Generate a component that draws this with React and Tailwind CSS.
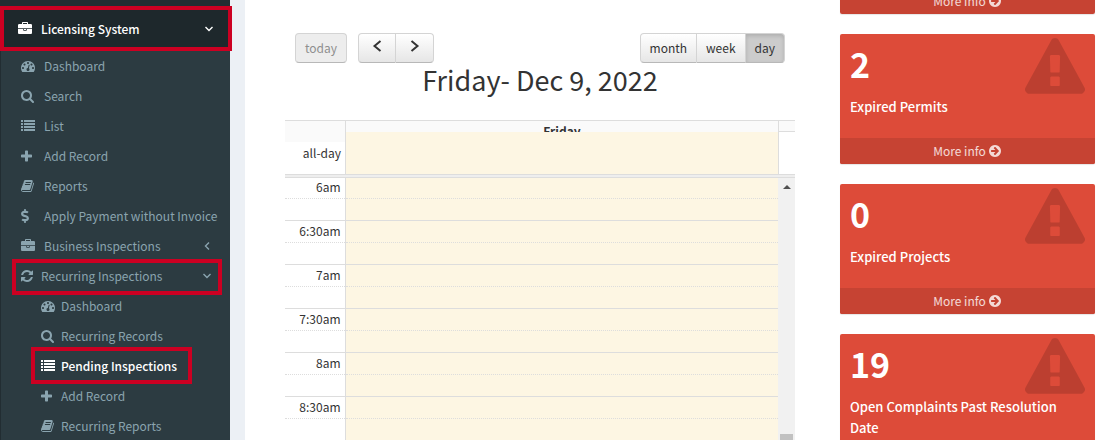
import { FaDollarSign } from 'react-icons/fa'

const ICONS = {
  briefcase:
    'M640 256h512v-128h-512v128zm1152 640v480q0 66-47 113t-113 47h-1472q-66 0-113-47t-47-113v-480h672v160q0 26 19 45t45 19h320q26 0 45-19t19-45v-160h672zm-768 0v128h-256v-128h256zm768-480v384h-1792v-384q0-66 47-113t113-47h352v-160q0-40 28-68t68-28h576q40 0 68 28t28 68v160h352q66 0 113 47t47 113z',
  gauge:
    'M384 1152q0-53-37.5-90.5t-90.5-37.5-90.5 37.5-37.5 90.5 37.5 90.5 90.5 37.5 90.5-37.5 37.5-90.5zm192-448q0-53-37.5-90.5t-90.5-37.5-90.5 37.5-37.5 90.5 37.5 90.5 90.5 37.5 90.5-37.5 37.5-90.5zm428 481l101-382q6-26-7.5-48.5t-38.5-29.5-48 6.5-30 39.5l-101 382q-60 5-107 43.5t-63 98.5q-20 77 20 146t117 89 146-20 89-117q16-60-6-117t-72-91zm660-33q0-53-37.5-90.5t-90.5-37.5-90.5 37.5-37.5 90.5 37.5 90.5 90.5 37.5 90.5-37.5 37.5-90.5zm-640-640q0-53-37.5-90.5t-90.5-37.5-90.5 37.5-37.5 90.5 37.5 90.5 90.5 37.5 90.5-37.5 37.5-90.5zm448 192q0-53-37.5-90.5t-90.5-37.5-90.5 37.5-37.5 90.5 37.5 90.5 90.5 37.5 90.5-37.5 37.5-90.5zm320 448q0 261-141 483-19 29-54 29h-1402q-35 0-54-29-141-221-141-483 0-182 71-348t191-286 286-191 348-71 348 71 286 191 191 286 71 348z',
  search:
    'M1152 832q0-185-131.5-316.5t-316.5-131.5-316.5 131.5-131.5 316.5 131.5 316.5 316.5 131.5 316.5-131.5 131.5-316.5zm512 832q0 52-38 90t-90 38q-54 0-90-38l-343-342q-179 124-399 124-143 0-273.5-55.5t-225-150-150-225-55.5-273.5 55.5-273.5 150-225 225-150 273.5-55.5 273.5 55.5 225 150 150 225 55.5 273.5q0 220-124 399l343 343q37 37 37 90z',
  list: 'M0 128h256v256h-256zm384 0h1408v256h-1408zM0 512h256v256h-256zm384 0h1408v256h-1408zM0 896h256v256h-256zm384 0h1408v256h-1408zM0 1280h256v256h-256zm384 0h1408v256h-1408z',
  plus: 'M1408 800v192q0 40-28 68t-68 28h-416v416q0 40-28 68t-68 28h-192q-40 0-68-28t-28-68v-416h-416q-40 0-68-28t-28-68v-192q0-40 28-68t68-28h416v-416q0-40 28-68t68-28h192q40 0 68 28t28 68v416h416q40 0 68 28t28 68z',
  book: 'M1639 478q40 57 18 129l-275 906q-19 64-76.5 107.5t-122.5 43.5h-923q-77 0-148.5-53.5t-99.5-131.5q-24-67-2-127 0-4 3-27t4-37q1-8-3-21.5t-3-19.5q2-11 8-21t16.5-23.5 16.5-23.5q23-38 45-91.5t30-91.5q3-10 .5-30t-.5-28q3-11 17-28t17-23q21-36 42-92t25-90q1-9-2.5-32t.5-28q4-13 22-30.5t22-22.5q19-26 42.5-84.5t27.5-96.5q1-8-3-25.5t-2-26.5q2-8 9-18t18-23 17-21q8-12 16.5-30.5t15-35 16-36 19.5-32 26.5-23.5 36-11.5 47.5 5.5l-1 3q38-9 51-9h761q74 0 114 56t18 130l-274 906q-36 119-71.5 153.5t-128.5 34.5h-869q-27 0-38 15-11 16-1 43 24 70 144 70h923q29 0 56-15.5t35-41.5l300-987q7-22 5-57 38 15 59 43zm-1064 2q-4 13 2 22.5t20 9.5h608q13 0 25.5-9.5t16.5-22.5l21-64q4-13-2-22.5t-20-9.5h-608q-13 0-25.5 9.5t-16.5 22.5zm-83 256q-4 13 2 22.5t20 9.5h608q13 0 25.5-9.5t16.5-22.5l21-64q4-13-2-22.5t-20-9.5h-608q-13 0-25.5 9.5t-16.5 22.5z',
  refresh:
    'M1511 1056q0 5-1 7-64 268-268 434.5t-478 166.5q-146 0-282.5-55t-243.5-157l-129 129q-19 19-45 19t-45-19-19-45v-448q0-26 19-45t45-19h448q26 0 45 19t19 45-19 45l-137 137q71 66 161 102t187 36q134 0 250-65t186-179q11-17 53-117 8-23 30-23h192q13 0 22.5 9.5t9.5 22.5zm25-800v448q0 26-19 45t-45 19h-448q-26 0-45-19t-19-45 19-45l138-138q-148-137-349-137-134 0-250 65t-186 179q-11 17-53 117-8 23-30 23h-199q-13 0-22.5-9.5t-9.5-22.5v-7q65-268 270-434.5t480-166.5q146 0 284 55.5t245 156.5l130-129q19-19 45-19t45 19 19 45z',
  arrowCircle:
    'M1413 896q0-27-18-45l-91-91-362-362q-18-18-45-18t-45 18l-91 91q-18 18-18 45t18 45l189 189h-502q-26 0-45 19t-19 45v128q0 26 19 45t45 19h502l-189 189q-19 19-19 45t19 45l91 91q18 18 45 18t45-18l362-362 91-91q18-18 18-45zm251 0q0 209-103 385.5t-279.5 279.5-385.5 103-385.5-103-279.5-279.5-103-385.5 103-385.5 279.5-279.5 385.5-103 385.5 103 279.5 279.5 103 385.5z',
  warning:
    'M1038 1400v-215q0-14-9.5-23.5t-22.5-9.5h-220q-13 0-22.5 9.5t-9.5 23.5v215q0 14 9.5 23.5t22.5 9.5h220q13 0 22.5-9.5t9.5-23.5zm-3-389l13-473q0-12-10-19-13-11-24-11h-236q-11 0-24 11-10 7-10 21l13 471q0 10 10 16.5t24 6.5h210q14 0 23.5-6.5t10.5-16.5zm-27-944l768 1408q35 63-2 126-17 29-46.5 46t-63.5 17h-1536q-34 0-63.5-17t-46.5-46q-37-63-2-126l768-1408q17-31 47-49t65-18 65 18 47 49z',
}

const MENU = [
  { name: 'Dashboard', icon: 'gauge' },
  { name: 'Search', icon: 'search' },
  { name: 'List', icon: 'list' },
  { name: 'Add Record', icon: 'plus' },
  { name: 'Reports', icon: 'book' },
  { name: 'Apply Payment without Invoice', icon: 'dollar' },
  { name: 'Business Inspections', icon: 'briefcase', arrow: 'left' },
]

const SUB_MENU = [
  { name: 'Dashboard', icon: 'gauge' },
  { name: 'Recurring Records', icon: 'search' },
  { name: 'Pending Inspections', icon: 'list', active: true },
  { name: 'Add Record', icon: 'plus' },
  { name: 'Recurring Reports', icon: 'book' },
]

const HOURS = ['6am', '6:30am', '7am', '7:30am', '8am', '8:30am']

const CARDS = [
  { count: 2, label: 'Expired Permits' },
  { count: 0, label: 'Expired Projects' },
  { count: 19, label: 'Open Complaints Past Resolution Date' },
]

function Icon({ name, className = 'size-3.5' }) {
  if (name === 'dollar') return <FaDollarSign className="h-3.5 w-2" />
  return (
    <svg viewBox="0 0 1792 1792" fill="currentColor" className={className} aria-hidden="true">
      <path d={ICONS[name]} />
    </svg>
  )
}

function Angle({ dir }) {
  return (
    <svg viewBox="0 0 10 10" className="size-2.5" fill="none" stroke="currentColor" strokeWidth="1.4" aria-hidden="true">
      <path d={dir === 'left' ? 'M7 1.5L3.5 5L7 8.5' : 'M1.5 3L5 6.5L8.5 3'} />
    </svg>
  )
}

// Red frame drawn around a menu entry
function Frame({ className }) {
  return <span className={`pointer-events-none absolute z-10 border-4 border-[#cc0022] ${className}`} />
}

function Sidebar() {
  return (
    <nav className="w-[230px] shrink-0 border-l border-[#222d32] bg-[#2c3b41] text-[12px] leading-5 whitespace-nowrap text-[#8aa4af]">
      <div className="h-1.5 bg-[#222d32]" />
      <div className="relative">
        <a href="#licensing" className="flex h-[45px] items-center bg-[#1e282c] pr-4 pl-[17px] font-medium text-white">
          <span className="w-[23px]"><Icon name="briefcase" /></span>
          <span className="flex-1">Licensing System</span>
          <Angle dir="down" />
        </a>
        <Frame className="inset-y-0 -right-0.5 -left-px" />
      </div>
      <ul>
        {MENU.map((item) => (
          <li key={item.name}>
            <a href="#menu" className="flex h-[30px] items-center pr-[18px] pl-5">
              <span className="w-[23px] shrink-0"><Icon name={item.icon} /></span>
              <span className="flex-1">{item.name}</span>
              {item.arrow && <Angle dir={item.arrow} />}
            </a>
          </li>
        ))}
        <li>
          <div className="relative">
            <a href="#recurring" className="flex h-[30px] items-center pr-[18px] pl-5">
              <span className="w-5 shrink-0"><Icon name="refresh" /></span>
              <span className="flex-1">Recurring Inspections</span>
              <Angle dir="down" />
            </a>
            <Frame className="-top-[2px] right-2 -bottom-1 left-[11px]" />
          </div>
          <ul>
            {SUB_MENU.map((item) => (
              <li key={item.name} className="relative">
                <a href="#submenu" className={`flex h-[30px] items-center pl-10 ${item.active ? 'font-medium text-white' : ''}`}>
                  <span className="w-5 shrink-0"><Icon name={item.icon} /></span>
                  {item.name}
                </a>
                {item.active && <Frame className="-top-1 right-[38px] -bottom-[3px] left-[30px]" />}
              </li>
            ))}
          </ul>
        </li>
      </ul>
    </nav>
  )
}

function ToolbarButton({ children, className = '', ...props }) {
  return (
    <button
      type="button"
      className={`flex h-[30px] items-center justify-center border-y border-r border-[#d4d4d4] border-b-[#b8b8b8] px-[9px] text-[#333] ${className}`}
      {...props}
    >
      {children}
    </button>
  )
}

function Chevron({ dir }) {
  return (
    <svg viewBox="0 0 10 12" className="mb-1 h-3 w-2.5" fill="none" stroke="currentColor" strokeWidth="2" aria-hidden="true">
      <path d={dir === 'left' ? 'M8.5 1L2.5 6L8.5 11' : 'M1.5 1L7.5 6L1.5 11'} />
    </svg>
  )
}

function Calendar() {
  const raised = 'bg-gradient-to-b from-white to-[#e6e6e6]'

  return (
    <section className="flex min-w-0 flex-1 flex-col text-[12px] leading-5 text-[#333]">
      <div className="flex px-2.5 pt-[33px]">
        <ToolbarButton disabled className="rounded border-l bg-[#ededed] text-[#8f8f8f]!">today</ToolbarButton>
        <div className="ml-[11px] flex">
          <ToolbarButton aria-label="Previous" className={`w-[38px] rounded-l border-l ${raised}`}><Chevron dir="left" /></ToolbarButton>
          <ToolbarButton aria-label="Next" className={`w-[38px] rounded-r ${raised}`}><Chevron dir="right" /></ToolbarButton>
        </div>
        <div className="ml-auto flex">
          <ToolbarButton className={`rounded-l border-l ${raised}`}>month</ToolbarButton>
          <ToolbarButton className={raised}>week</ToolbarButton>
          <ToolbarButton className="rounded-r bg-[#ccc] shadow-[inset_0_2px_4px_rgba(0,0,0,0.15)]">day</ToolbarButton>
        </div>
      </div>
      <h2 className="mb-6 text-center text-[27px] leading-[33px]">Friday- Dec 9, 2022</h2>

      <div className="flex h-[54px] border-t border-[#ddd]">
        <div className="w-[60px] shrink-0 pr-1 text-right">
          <div className="-mr-1 h-[21px] bg-[#fafafa]" />
          <div className="pt-px">all-day</div>
        </div>
        <div className="flex-1 border-x border-[#ddd] bg-[#fdf6e3]">
          <div className="h-[11px] overflow-hidden bg-[#fafafa] text-center font-bold">Friday</div>
        </div>
        <div className="w-4 shrink-0">
          <div className="h-[11px] border-b border-[#ddd] bg-[#fafafa]" />
        </div>
      </div>
      <div className="h-1 shrink-0 border-y border-[#ddd] bg-[#eee]" />

      <div className="flex min-h-0 flex-1 overflow-hidden">
        <table className="-mt-0.5 h-min flex-1 table-fixed border-collapse">
          <tbody>
            {HOURS.map((hour) => [
              <tr key={hour} className="h-[22px] border-t border-[#ddd]">
                <th scope="row" className="w-[60px] p-0 pr-1 text-right align-top leading-5 font-normal">{hour}</th>
                <td className="border-l border-[#ddd] bg-[#fdf6e3] p-0" />
              </tr>,
              <tr key={`${hour}-half`} className="h-[22px] border-t border-dotted border-[#ddd]">
                <td className="p-0" />
                <td className="border-l border-[#ddd] bg-[#fdf6e3] p-0 [border-left-style:solid]" />
              </tr>,
            ])}
          </tbody>
        </table>
        <div className="flex w-[17px] flex-col items-center justify-between bg-[#f1f1f1]">
          <svg viewBox="0 0 8 4" className="mt-[7px] h-1 w-2" fill="#505050" aria-hidden="true">
            <path d="M4 0L8 4H0z" />
          </svg>
          <div className="h-1.5 w-[13px] bg-[#c1c1c1]" />
        </div>
      </div>
    </section>
  )
}

function MoreInfo() {
  return (
    <a href="#more" className="flex h-[26px] items-center justify-center gap-0.5 bg-[#c64333] text-[12px] leading-5 text-white/80">
      More info
      <Icon name="arrowCircle" />
    </a>
  )
}

function StatCard({ count, label }) {
  return (
    <article className="shrink-0 overflow-hidden rounded-xs bg-[#dd4b39] text-white shadow-[0_1px_1px_rgba(0,0,0,0.1)]">
      <div className="relative min-h-[104px] px-2.5 pt-[11px] pb-2.5">
        <h3 className="mb-[13px] text-[34px] leading-[38px] font-bold">{count}</h3>
        <p className="pr-5 text-[13px] leading-[21px] font-medium">{label}</p>
        <Icon name="warning" className="absolute top-1 right-2.5 size-[60px] text-black/15" />
      </div>
      <MoreInfo />
    </article>
  )
}

export default function App() {
  return (
    <div className="flex h-screen overflow-hidden bg-white font-['Noto_Sans_CJK_SC',sans-serif]">
      <Sidebar />
      <div className="w-[15px] shrink-0 bg-[#ecf0f5]" />
      <main className="flex min-w-0 flex-1 gap-[45px] pr-1 pl-10">
        <Calendar />
        <aside className="flex w-[255px] shrink-0 flex-col gap-5">
          <div className="-mt-3 shrink-0 overflow-hidden rounded-b-xs shadow-[0_1px_1px_rgba(0,0,0,0.1)]">
            <MoreInfo />
          </div>
          {CARDS.map((card) => (
            <StatCard key={card.label} {...card} />
          ))}
        </aside>
      </main>
    </div>
  )
}
